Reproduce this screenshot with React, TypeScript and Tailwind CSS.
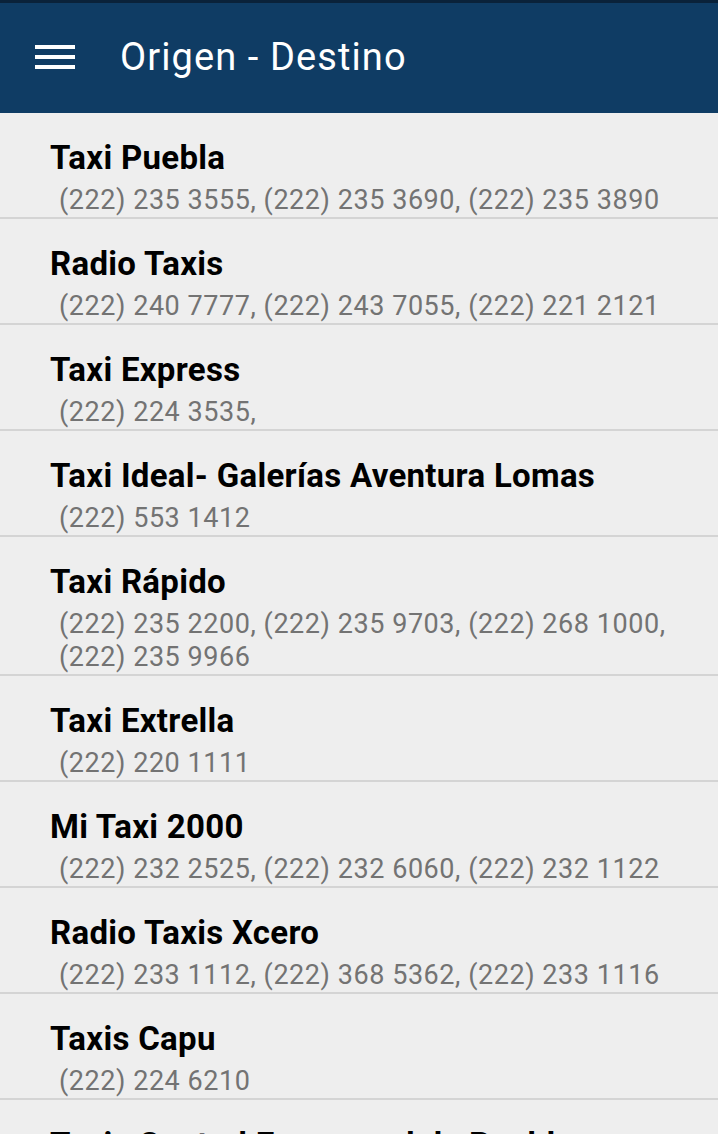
import React from "react";

const items: { name: string; phones: string }[] = [
  { name: "Taxi Puebla", phones: "(222) 235 3555, (222) 235 3690, (222) 235 3890" },
  { name: "Radio Taxis", phones: "(222) 240 7777, (222) 243 7055, (222) 221 2121" },
  { name: "Taxi Express", phones: "(222) 224 3535," },
  { name: "Taxi Ideal- Galerías Aventura Lomas", phones: "(222) 553 1412" },
  { name: "Taxi Rápido", phones: "(222) 235 2200, (222) 235 9703, (222) 268 1000, (222) 235 9966" },
  { name: "Taxi Extrella", phones: "(222) 220 1111" },
  { name: "Mi Taxi 2000", phones: "(222) 232 2525, (222) 232 6060, (222) 232 1122" },
  { name: "Radio Taxis Xcero", phones: "(222) 233 1112, (222) 368 5362, (222) 233 1116" },
  { name: "Taxis Capu", phones: "(222) 224 6210" },
  { name: "Taxis Central Emmanuel de Puebla", phones: "(222) 000 0000" },
];

export default function App() {
  return (
    <div
      className="w-[718px] h-[1134px] overflow-hidden bg-[#eeeeee]"
      style={{ fontFamily: "Roboto, 'Liberation Sans', sans-serif" }}
    >
      <header className="h-[113px] bg-[#0f3c64] border-t-[3px] border-[#0a223a] flex items-center">
        <div className="ml-[35px] w-[40px] flex flex-col gap-[6px] mt-[-3px]">
          <span className="block h-[4px] bg-white" />
          <span className="block h-[4px] bg-white" />
          <span className="block h-[4px] bg-white" />
        </div>
        <h1 className="ml-[45px] text-white text-[38px] leading-none font-normal tracking-[1.1px] mt-[-2px]">
          Origen - Destino
        </h1>
      </header>
      <ul>
        {items.map((it) => (
          <li key={it.name} className="pl-[50px] pr-[20px] pt-[28px] border-b-2 border-[#d4d4d4]">
            <div className="text-[33px] leading-[33px] font-bold text-black whitespace-nowrap tracking-[0.3px]">
              {it.name}
            </div>
            <div className="mt-[10px] pl-[9px] text-[27px] leading-[33px] text-[#737373] tracking-[0.55px]">
              {it.phones}
            </div>
          </li>
        ))}
      </ul>
    </div>
  );
}
